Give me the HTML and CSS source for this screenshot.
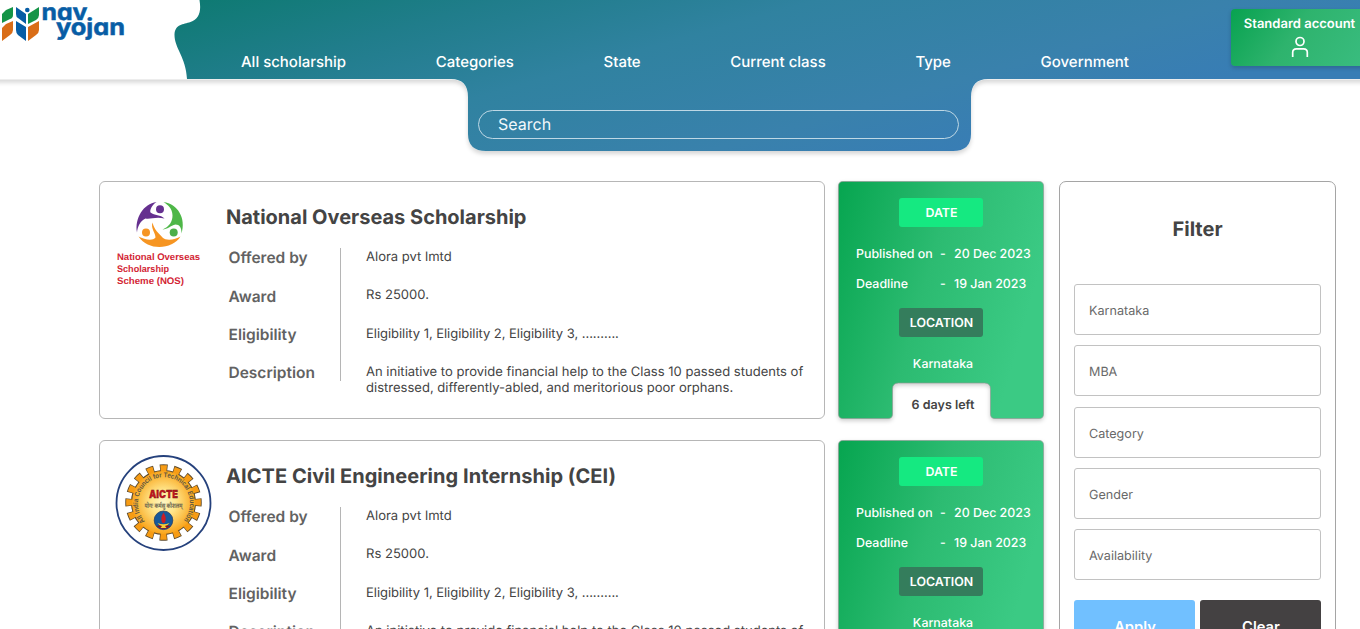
FILE: index.html
```html
<!DOCTYPE html>
<html lang="en">
<head>
<meta charset="utf-8">
<title>Nav Yojan</title>
<link rel="stylesheet" href="styles.css">
</head>
<body>
<svg class="defs" width="0" height="0" aria-hidden="true">
  <defs>
    <linearGradient id="green" gradientUnits="userSpaceOnUse" x1="0" y1="20" x2="205" y2="78">
      <stop offset="0" stop-color="#08a651"/><stop offset=".5" stop-color="#2cbb71"/><stop offset="1" stop-color="#3bca84"/>
    </linearGradient>
    <symbol id="ticket" viewBox="0 0 206 238">
      <path d="M5 .5H201Q205.500 .5 205.500 5V233Q205.500 237.500 201 237.500H157Q152.500 237.500 152.500 233V208Q152.500 202 146.500 202H60.500Q54.500 202 54.500 208V233Q54.500 237.500 50 237.500H5Q.5 237.500 .5 233V5Q.5 .5 5 .5Z" fill="url(#green)" stroke="#8c9a92" stroke-opacity=".65"/>
    </symbol>
  </defs>
</svg>
<header class="header">
  <svg class="header-shape" width="1360" height="165" viewBox="0 0 1360 165">
    <defs>
      <linearGradient id="sea" gradientUnits="userSpaceOnUse" x1="190" y1="0" x2="289" y2="346">
        <stop offset="0" stop-color="#0e7a72"/><stop offset=".24" stop-color="#207d8b"/><stop offset=".48" stop-color="#3082a0"/><stop offset=".8" stop-color="#3981ac"/><stop offset="1.0" stop-color="#387db5"/>
      </linearGradient>
    </defs>
    <path class="bar" d="M-5 -9H1365V79.500H988Q971 79.500 971 97V134Q971 151 953 151H486Q468 151 468 134V97Q468 79.500 451 79.500H-5Z"/>
    <path fill="url(#sea)" d="M199.500 0C201.500 12 199 19 190.500 22C183 24.500 175.500 24 174.500 34C174 48 186 57 187 79H451Q468 79 468 97V134Q468 151 486 151H953Q971 151 971 134V97Q971 79 988 79H1360V0Z"/>
  </svg>
  <svg class="logo" width="130" height="46" viewBox="0 0 130 46">
    <path fill="#159447" d="M2 14L6 10L13 7V15Q13 18 10 19L2 23Z"/>
    <path fill="#d96d17" d="M2 28L6 24L13 21V30Q13 33 10 35L2 41Z"/>
    <path fill="#075da5" d="M16 7L26 14V24L18 18Q16 17 16 14ZM16 21L26 27V41L18 35Q16 33 16 30Z"/>
    <circle fill="#075da5" cx="27.300" cy="10" r="2.300"/>
    <path fill="#159447" d="M28 14L39 7V15Q39 18 36 20L28 24Z"/>
    <path fill="#d96d17" d="M28 27L39 21V30Q39 33 36 35L28 41Z"/>
    <text class="word" x="41.500" y="19.500" textLength="46" lengthAdjust="spacingAndGlyphs">nav</text>
    <text class="word" x="56" y="35.300" textLength="69" lengthAdjust="spacingAndGlyphs">yojan</text>
  </svg>
  <nav class="nav"><a>All scholarship</a><a>Categories</a><a>State</a><a>Current class</a><a>Type</a><a>Government</a></nav>
  <div class="account">
    <span>Standard account</span>
    <svg width="18" height="22" viewBox="0 0 18 22" fill="none" stroke="#fff" stroke-width="1.700"><circle cx="9" cy="5.500" r="4"/><path d="M1.700 21V16.500Q1.700 12.800 5.400 12.800H12.600Q16.300 12.800 16.300 16.500V21"/></svg>
  </div>
  <div class="search">Search</div>
</header>
<main class="page">
  <section class="list">
    <article class="row">
      <div class="card">
        <div class="emblem">
          <svg width="96" height="96" viewBox="0 0 96 96">
            <g transform="translate(20.500 5.500)">
              <path fill="#65308f" d="M0.500 31C-2 17 7 2 20 .5C15 4 13 9 14 11C18 14 24 13 28 17C19 15 14 18 9 17C4 19 1 25 .5 31Z"/>
              <circle fill="#65308f" cx="23.500" cy="7.700" r="4"/>
              <path fill="#4eb748" d="M27 .5C41 2 50 17 45 32C45 26 43 23 39 23C34 24 31 28 26 28C33 25 36 20 36 14C36 7 31 3 27 .5Z"/>
              <circle fill="#4cae49" cx="37.200" cy="31" r="4"/>
              <path fill="#f69522" d="M2 35C8 38 16 40 19 36C19 31 14 27 16 21C18 29 22 31 26 36C30 40 39 38 44 35C36 48 12 50 2 35Z"/>
              <circle fill="#f69522" cx="9.500" cy="31" r="4"/>
            </g>
            <g class="nos"><text x="1" y="64" textLength="83" lengthAdjust="spacingAndGlyphs">National Overseas</text><text x="1" y="76" textLength="52" lengthAdjust="spacingAndGlyphs">Scholarship</text><text x="1" y="87.500" textLength="67" lengthAdjust="spacingAndGlyphs">Scheme (NOS)</text></g>
          </svg>
        </div>
        <div class="info">
          <h2>National Overseas Scholarship</h2>
          <div class="facts">
            <div class="labels"><span>Offered by</span><span>Award</span><span>Eligibility</span><span>Description</span></div>
            <div class="values"><span>Alora pvt lmtd</span><span>Rs 25000.</span><span class="tight">Eligibility 1, Eligibility 2, Eligibility 3, ..........</span><span>An initiative to provide financial help to the Class 10 passed students of distressed, differently-abled, and meritorious poor orphans.</span></div>
          </div>
        </div>
      </div>
      <aside class="ticket">
        <svg class="ticket-bg" width="206" height="238"><use href="#ticket"/></svg>
        <b class="tag date">DATE</b>
        <div class="dates"><span>Published on</span><i>-</i><span>20 Dec 2023</span><span>Deadline</span><i>-</i><span>19 Jan 2023</span></div>
        <b class="tag place">LOCATION</b>
        <span class="where">Karnataka</span>
        <span class="left">6 days left</span>
      </aside>
    </article>
    <article class="row">
      <div class="card">
        <div class="emblem">
          <svg width="96" height="96" viewBox="0 0 96 96">
            <defs>
              <radialGradient id="gold"><stop offset="0" stop-color="#fff7c4"/><stop offset=".4" stop-color="#ffe58a"/><stop offset="1" stop-color="#f9a51c"/></radialGradient>
              <path id="arc" d="M29 66A26 26 0 1 1 67 66"/>
            </defs>
            <circle cx="47.500" cy="48" r="47" fill="#fff" stroke="#25417c" stroke-width="1.800"/>
            <g transform="rotate(-6.300 47.500 47.500)" fill="none">
              <circle cx="47.500" cy="47.500" r="34" stroke="#5d4a2c" stroke-width="8.500" stroke-dasharray="7.400 5.952" />
              <circle cx="47.500" cy="47.500" r="31.500" stroke="#5d4a2c" stroke-width="2"/>
              <circle cx="47.500" cy="47.500" r="33.600" stroke="#f79c14" stroke-width="7.500" stroke-dasharray="6 7.195" stroke-dashoffset="-.6"/>
            </g>
            <circle cx="47.500" cy="47.500" r="31.500" fill="url(#gold)"/>
            <text class="ring"><textPath href="#arc" textLength="119" lengthAdjust="spacingAndGlyphs">All India Council for Technical Education</textPath></text>
            <text class="aicte" x="47.500" y="42.500" text-anchor="middle" textLength="29" lengthAdjust="spacingAndGlyphs">AICTE</text>
            <text class="motto" x="47.500" y="52.500" text-anchor="middle" textLength="38" lengthAdjust="spacingAndGlyphs">योगः कर्मसु कौशलम्</text>
            <circle cx="47.500" cy="65.300" r="9.300" fill="#17599a" stroke="#263d65" stroke-width=".8"/>
            <path fill="#c91e25" d="M47.500 57.500Q51.500 64 48.500 68H46.500Q43.500 64 47.500 57.500Z"/>
            <path fill="#8c1522" d="M40.500 71Q47.500 77 54.500 71L49.500 70H45.500Z"/>
            <path fill="#f6cf35" d="M41.500 68Q47.500 70.500 53.500 68Q51.500 71 49 71L50.500 73H44.500L46 71Q43.500 71 41.500 68Z"/>
          </svg>
        </div>
        <div class="info">
          <h2 class="wide">AICTE Civil Engineering Internship (CEI)</h2>
          <div class="facts">
            <div class="labels"><span>Offered by</span><span>Award</span><span>Eligibility</span><span>Description</span></div>
            <div class="values"><span>Alora pvt lmtd</span><span>Rs 25000.</span><span class="tight">Eligibility 1, Eligibility 2, Eligibility 3, ..........</span><span>An initiative to provide financial help to the Class 10 passed students of distressed, differently-abled, and meritorious poor orphans.</span></div>
          </div>
        </div>
      </div>
      <aside class="ticket">
        <svg class="ticket-bg" width="206" height="238"><use href="#ticket"/></svg>
        <b class="tag date">DATE</b>
        <div class="dates"><span>Published on</span><i>-</i><span>20 Dec 2023</span><span>Deadline</span><i>-</i><span>19 Jan 2023</span></div>
        <b class="tag place">LOCATION</b>
        <span class="where">Karnataka</span>
        <span class="left">6 days left</span>
      </aside>
    </article>
  </section>
  <aside class="filter">
    <h2>Filter</h2>
    <div class="fields"><div>Karnataka</div><div>MBA</div><div>Category</div><div>Gender</div><div>Availability</div></div>
    <div class="actions"><button class="apply">Apply</button><button class="clear">Clear</button></div>
  </aside>
</main>
</body>
</html>
```
FILE: styles.css
```css
* { box-sizing: border-box; }
html, body { height: 629px; overflow: hidden; }
body { margin: 0; background: #fff; font-family: Inter, "Liberation Sans", sans-serif; color: #444; text-rendering: geometricPrecision; }
.defs { position: absolute; }
.header { position: relative; height: 181px; }
.header-shape { position: absolute; left: 0; top: 0; }
.bar { fill: #fff; filter: drop-shadow(0 3px 2px rgba(0, 0, 0, .16)); }
.logo { position: absolute; left: 0; top: 0; }
.word { font: 700 23px Inter, sans-serif; font-feature-settings: "cv11"; fill: #075da5; stroke: #075da5; stroke-width: .5px; }
.nav { position: relative; display: flex; gap: 89.700px; padding: 53px 0 0 241px; height: 110px; white-space: nowrap; }
.nav a { font-size: 14.970px; line-height: 18px; font-weight: 500; color: #fff; }
.account { position: absolute; left: 1231px; top: 9px; width: 137px; height: 57px; padding-top: 7px; border-radius: 4px; background: linear-gradient(125deg, #08a250, #2eb36d 45%, #3abd80); box-shadow: 0 2px 4px rgba(0, 0, 0, .18); color: #fff; display: flex; flex-direction: column; align-items: center; gap: 3px; font-size: 13px; line-height: 17px; font-weight: 600; white-space: nowrap; }
.search { position: relative; width: 481px; height: 29px; margin-left: 478px; padding-left: 19px; border: 1px solid #bed8e5; border-radius: 15px; color: #f2f8fb; font-size: 16px; line-height: 27px; }
.page { display: flex; align-items: flex-start; gap: 15px; padding-left: 99px; }
.list { display: flex; flex-direction: column; gap: 21px; }
.row { display: flex; gap: 13px; }
.card { width: 726px; height: 238px; display: flex; gap: 14px; padding: 14px 0 0 16px; border: 1px solid #b6b6b6; border-radius: 6px; }
.emblem { width: 96px; height: 96px; }
.emblem svg { display: block; overflow: visible; }
.nos { font: 700 9.500px "Liberation Sans", Arial, sans-serif; fill: #d32635; }
.ring { font: 700 7px "Liberation Sans", Arial, sans-serif; fill: #5f563f; }
.aicte { font: 900 11px Inter, sans-serif; fill: #c4161f; stroke: #641212; stroke-width: .3px; }
.motto { font: 700 7px "Noto Sans", "Noto Sans Devanagari", sans-serif; fill: #6d674f; }
.info h2 { margin: 8px 0 0; font-size: 20px; line-height: 26px; font-weight: 700; white-space: nowrap; }
.info .wide { letter-spacing: .05px; }
.facts { display: flex; padding: 18px 0 0 2.500px; }
.labels { display: grid; grid-template-rows: 38.600px 38.400px 38.200px auto; width: 112.500px; height: 133px; border-right: 1px solid #b5b5b5; font-size: 15.500px; line-height: 20px; font-weight: 600; color: #626262; }
.values { display: grid; grid-template-rows: 38.400px 38.400px 38.400px auto; width: 470px; margin-top: 1px; padding-left: 25px; font-size: 13.040px; line-height: 16px; }
.tight { letter-spacing: -.05px; }
.ticket { position: relative; width: 206px; height: 238px; display: flex; flex-direction: column; align-items: center; padding-top: 17px; color: #fff; font-size: 12.400px; line-height: 16px; font-weight: 500; }
.ticket > * { position: relative; }
.ticket .ticket-bg { position: absolute; left: 0; top: 0; overflow: visible; filter: drop-shadow(0 2px 2px rgba(0, 0, 0, .2)); }
.tag { width: 84px; height: 29px; padding-left: 1px; border-radius: 3px; text-align: center; line-height: 29px; font-weight: 600; }
.date { background: #15e981; }
.place { background: #347d5c; }
.dates { display: grid; grid-template-columns: 84px 14px 76px; row-gap: 14px; margin: 18.500px 0 16.500px; padding-left: 4px; white-space: nowrap; }
.dates i { font-style: normal; }
.where { margin: 19px 0 0 4px; }
.left { margin: 26px 0 0 4px; color: #444; font-weight: 600; font-size: 12.500px; }
.filter { width: 277px; height: 500px; padding: 34px 14px 0; border: 1px solid #a5a5a5; border-radius: 7px; }
.filter h2 { margin: 0 0 42px; font-size: 20px; line-height: 26px; font-weight: 700; text-align: center; }
.fields { display: flex; flex-direction: column; gap: 10.300px; }
.fields div { height: 51px; border: 1px solid #c2c2c2; border-radius: 3px; padding-left: 14px; line-height: 53px; font-size: 12.600px; color: #696969; }
.actions { display: grid; grid-template-columns: 121px 121px; gap: 5px; margin-top: 20px; }
.actions button { height: 52px; padding: 2px 0 0 1px; border: 0; border-radius: 3px; color: #fff; font: 600 14.700px Inter, sans-serif; }
.apply { background: #71c0ff; }
.clear { background: #444142; }
```
